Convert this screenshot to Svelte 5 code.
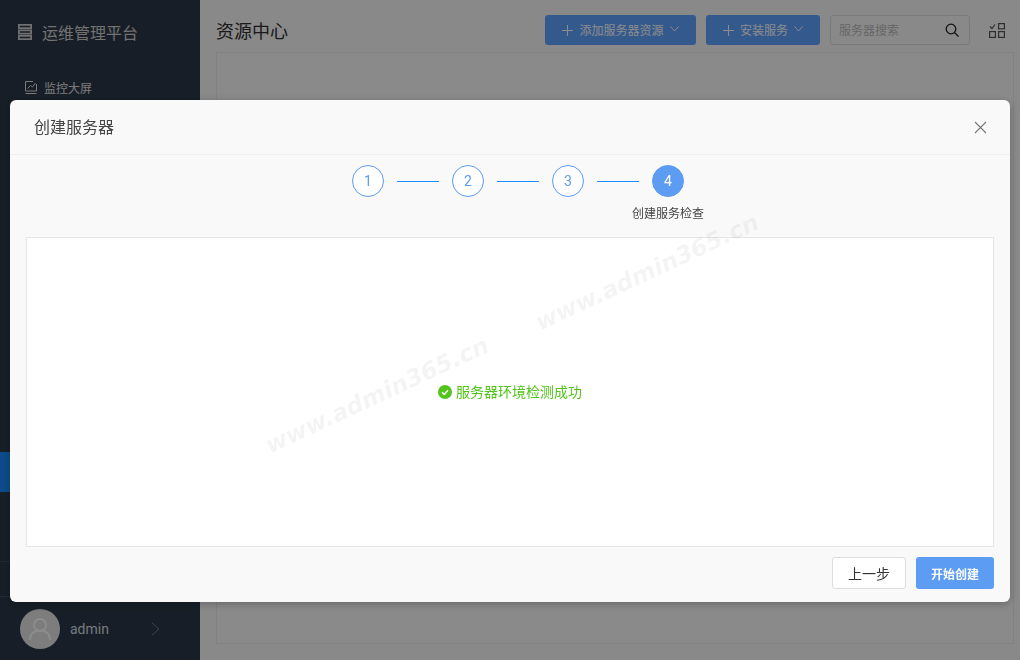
<script>
	const steps = [1, 2, 3, 4];
	const current = 4;
</script>

<div class="layout">
	<aside class="sidebar">
		<div class="logo">
			<svg width="14" height="16" viewBox="0 0 14 16" fill="none" stroke="currentColor" stroke-width="1.7">
				<rect x="0.85" y="0.85" width="12.3" height="3.3" />
				<rect x="0.85" y="6.35" width="12.3" height="3.3" />
				<rect x="0.85" y="11.85" width="12.3" height="3.3" />
			</svg>
			<span>运维管理平台</span>
		</div>
		<nav class="nav">
			<a class="nav-item">
				<svg width="12" height="14" viewBox="0 0 12 14" fill="none" stroke="currentColor" stroke-width="1">
					<path d="M8 1.500H.5v9.500h11V4M.5 13.500h11M2.500 8.500l3-3 2 1.500 3-4" />
				</svg>
				<span>监控大屏</span>
			</a>
			<div class="nav-active"></div>
		</nav>
		<div class="side-row"></div>
		<div class="user">
			<div class="avatar">
				<svg width="24" height="24" viewBox="0 0 24 24" fill="none" stroke="currentColor" stroke-width="2">
					<circle cx="12" cy="8" r="6" />
					<path d="M2 23c0-6 4-9.500 10-9.500S22 17 22 23" />
				</svg>
			</div>
			<span class="user-name">admin</span>
			<svg class="user-arrow" width="9" height="14" viewBox="0 0 9 14" fill="none" stroke="currentColor">
				<path d="M1 1l7 6-7 6" />
			</svg>
		</div>
	</aside>

	<main class="main">
		<header class="topbar">
			<h1>资源中心</h1>
			<div class="actions">
				<button class="btn-blue add">
					<svg width="11" height="11" viewBox="0 0 11 11" stroke="currentColor"><path d="M5.500 0v11M0 5.500h11" /></svg>
					<span>添加服务器资源</span>
					<svg class="caret" width="9" height="6" viewBox="0 0 9 6" fill="none" stroke="currentColor"><path d="M.5 .5l4 4.500 4-4.500" /></svg>
				</button>
				<button class="btn-blue install">
					<svg width="11" height="11" viewBox="0 0 11 11" stroke="currentColor"><path d="M5.500 0v11M0 5.500h11" /></svg>
					<span>安装服务</span>
					<svg class="caret" width="9" height="6" viewBox="0 0 9 6" fill="none" stroke="currentColor"><path d="M.5 .5l4 4.500 4-4.500" /></svg>
				</button>
				<div class="search">
					<span>服务器搜索</span>
					<svg width="14" height="14" viewBox="0 0 14 14" fill="none" stroke="#222" stroke-width="1.300">
						<circle cx="6" cy="6" r="4.800" />
						<path d="M9.500 9.500l4 4" />
					</svg>
				</div>
				<svg class="grid-icon" width="16" height="15" viewBox="0 0 16 15" fill="none" stroke="#555" stroke-width="1.200">
					<rect x="9.600" y="0.600" width="5.800" height="5.200" />
					<rect x="0.600" y="8.600" width="5.800" height="5.800" />
					<rect x="9.600" y="8.600" width="5.800" height="5.800" />
					<path d="M1 3.500l2 2 3-4" />
				</svg>
			</div>
		</header>
		<section class="card"></section>
	</main>
</div>

<div class="mask"></div>

<div class="modal">
	<div class="modal-head">
		<span>创建服务器</span>
		<svg width="13" height="13" viewBox="0 0 13 13" stroke="#777" stroke-width="1.100">
			<path d="M1 1l11 11M12 1L1 12" />
		</svg>
	</div>
	<div class="modal-body">
		<div class="steps">
			{#each steps as step, i}
				<div class="step">
					<div class="circle" class:active={step === current}>{step}</div>
					{#if step === current}
						<div class="step-label">创建服务检查</div>
					{/if}
				</div>
				{#if i < steps.length - 1}
					<div class="connector"></div>
				{/if}
			{/each}
		</div>
		<div class="result">
			<div class="success">
				<svg width="14" height="14" viewBox="0 0 14 14">
					<circle cx="7" cy="7" r="7" fill="#52c41a" />
					<path d="M4 7.200l2.200 2.200L10 5.200" fill="none" stroke="#fff" stroke-width="1.500" />
				</svg>
				<span>服务器环境检测成功</span>
			</div>
		</div>
		<div class="modal-foot">
			<button class="btn-default">上一步</button>
			<button class="btn-primary">开始创建</button>
		</div>
	</div>
</div>

<div class="watermark wm-one">www.admin365.cn</div>
<div class="watermark wm-two">www.admin365.cn</div>

<style>
	:global(body) {
		margin: 0;
		font-family: "Noto Sans CJK SC", "Liberation Sans", sans-serif;
	}
	.layout {
		display: flex;
		height: 660px;
		overflow: hidden;
		background: #fafafa;
	}
	.sidebar {
		width: 200px;
		flex-shrink: 0;
		display: flex;
		flex-direction: column;
		background: #2a3847;
		color: #e6e6e6;
	}
	.logo {
		display: flex;
		align-items: center;
		gap: 10px;
		height: 64px;
		padding-left: 18px;
		font-size: 16px;
		color: #d0d0d0;
	}
	.nav {
		flex: 1;
		padding-top: 3px;
	}
	.nav-item {
		display: flex;
		align-items: center;
		gap: 7px;
		height: 40px;
		padding-left: 25px;
		font-size: 12px;
		color: #e0e0e0;
	}
	.nav-active {
		height: 40px;
		margin-top: 345px;
		background: #1989fa;
	}
	.side-row {
		height: 34px;
		border-top: 1px solid #3c4a59;
	}
	.user {
		display: flex;
		align-items: center;
		height: 63px;
		padding-left: 20px;
		border-top: 1px solid #3c4a59;
	}
	.avatar {
		width: 40px;
		height: 40px;
		border-radius: 50%;
		background: #e4e4e4;
		color: #fff;
		display: flex;
		align-items: center;
		justify-content: center;
	}
	.user-name {
		margin-left: 10px;
		width: 81px;
		font-family: Roboto, sans-serif;
		font-size: 14px;
		color: #d6dde5;
	}
	.user-arrow {
		color: #778;
	}
	.main {
		flex: 1;
		display: flex;
		flex-direction: column;
		padding: 0 6px 16px 16px;
		min-width: 0;
	}
	.topbar {
		height: 52px;
		flex-shrink: 0;
		display: flex;
		align-items: center;
		justify-content: space-between;
		padding: 8px 9px 0 0;
		box-sizing: border-box;
	}
	h1 {
		margin: 0;
		font-size: 18px;
		font-weight: 400;
		color: #303030;
	}
	.actions {
		display: flex;
		align-items: center;
		gap: 10px;
	}
	.btn-blue {
		height: 30px;
		display: flex;
		align-items: center;
		justify-content: center;
		gap: 6px;
		padding: 0;
		border: none;
		border-radius: 3px;
		background: #60a3ff;
		color: #fff;
		font: inherit;
		font-size: 12px;
	}
	.btn-blue span {
		margin-bottom: 2px;
	}
	.add {
		width: 151px;
	}
	.install {
		width: 114px;
	}
	.caret {
		margin-bottom: 3px;
	}
	.search {
		box-sizing: border-box;
		width: 140px;
		height: 30px;
		display: flex;
		align-items: center;
		justify-content: space-between;
		padding: 0 10px 0 8px;
		border: 1px solid #dcdcdc;
		border-radius: 3px;
		font-size: 12px;
		color: #bbb;
	}
	.search span {
		margin-bottom: 2px;
	}
	.grid-icon {
		margin-left: 9px;
	}
	.card {
		flex: 1;
		border: 1px solid #ececec;
		background: #fbfbfb;
	}
	.mask {
		position: fixed;
		inset: 0;
		background: rgba(0, 0, 0, 0.45);
	}
	.modal {
		position: fixed;
		left: 10px;
		top: 100px;
		width: 1000px;
		height: 502px;
		box-sizing: border-box;
		display: flex;
		flex-direction: column;
		background: #f9f9f9;
		border-radius: 6px;
		box-shadow: 0 2px 8px rgba(0, 0, 0, 0.25);
	}
	.modal-head {
		box-sizing: border-box;
		height: 55px;
		flex-shrink: 0;
		display: flex;
		align-items: center;
		justify-content: space-between;
		padding: 0 23px 0 24px;
		border-bottom: 1px solid #efefef;
		font-size: 16px;
		color: #444;
	}
	.modal-head span {
		margin-bottom: 2px;
	}
	.modal-body {
		flex: 1;
		display: flex;
		flex-direction: column;
		padding: 10px 16px 13px;
		min-height: 0;
	}
	.steps {
		height: 72px;
		flex-shrink: 0;
		display: flex;
		justify-content: center;
		padding-left: 16px;
	}
	.step {
		width: 32px;
		display: flex;
		flex-direction: column;
		align-items: center;
	}
	.circle {
		box-sizing: border-box;
		width: 32px;
		height: 32px;
		flex-shrink: 0;
		padding-bottom: 1px;
		border: 1px solid #5c9cf2;
		border-radius: 50%;
		background: #fff;
		display: flex;
		align-items: center;
		justify-content: center;
		font-family: Roboto, sans-serif;
		font-size: 14px;
		color: #5c9cf2;
	}
	.circle.active {
		background: #5c9cf2;
		color: #fff;
	}
	.step-label {
		margin-top: 7px;
		font-size: 12px;
		line-height: 18px;
		white-space: nowrap;
		color: #444;
	}
	.connector {
		width: 42px;
		height: 1px;
		margin: 16px 13px 0;
		background: #1890ff;
	}
	.result {
		flex: 1;
		display: flex;
		align-items: center;
		justify-content: center;
		border: 1px solid #e6e6e6;
		background: #fff;
	}
	.success {
		display: flex;
		align-items: center;
		gap: 4px;
		font-size: 14px;
		color: #52c41a;
	}
	.success span {
		margin-bottom: 2px;
	}
	.modal-foot {
		flex-shrink: 0;
		display: flex;
		justify-content: flex-end;
		gap: 10px;
		padding-top: 10px;
	}
	.modal-foot button {
		height: 32px;
		border-radius: 3px;
		font: inherit;
	}
	.btn-default {
		width: 74px;
		border: 1px solid #dcdcdc;
		background: #fff;
		font-size: 14px !important;
		color: #333;
	}
	.btn-primary {
		width: 78px;
		border: none;
		background: #5c9cf2;
		font-size: 12px !important;
		font-weight: 700 !important;
		color: #fff;
	}
	.watermark {
		position: fixed;
		transform: translate(-50%, -50%) rotate(-25deg);
		font-family: "DejaVu Sans", sans-serif;
		font-size: 23.5px;
		font-weight: 700;
		font-style: italic;
		white-space: nowrap;
		color: rgba(0, 0, 0, 0.045);
		pointer-events: none;
	}
	.wm-one {
		left: 377px;
		top: 395px;
	}
	.wm-two {
		left: 647px;
		top: 272px;
	}
</style>
